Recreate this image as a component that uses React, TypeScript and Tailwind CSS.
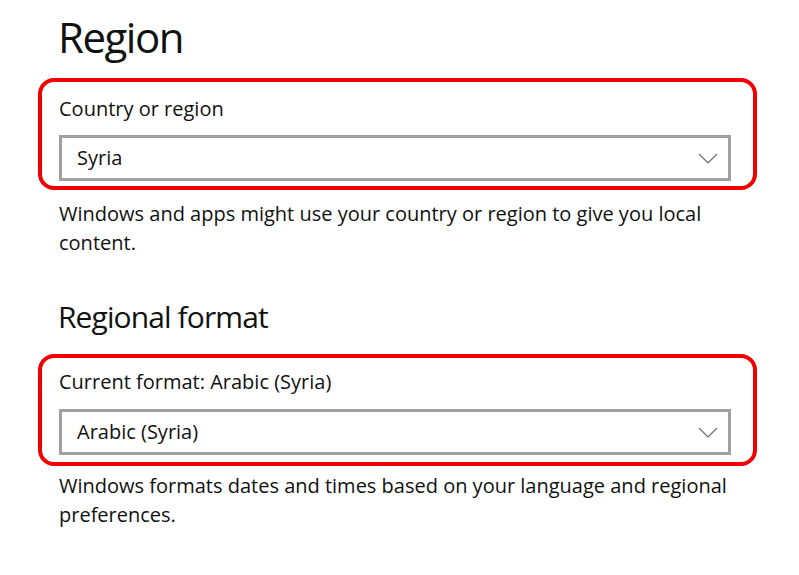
import React from 'react';

function Chevron() {
  return (
    <svg width="20" height="11" viewBox="0 0 20 11" fill="none" className="shrink-0">
      <path d="M1 1l9 9 9-9" stroke="#666" strokeWidth="1.1" />
    </svg>
  );
}

function Dropdown({ value }: { value: string }) {
  return (
    <div className="flex h-[46px] items-center justify-between border-[3px] border-[#a0a0a0] bg-white pl-[15px] pr-[10px]">
      <span className="text-[20px] leading-[28px]">{value}</span>
      <Chevron />
    </div>
  );
}

function Highlight({
  label,
  value,
  pt,
  gap,
  pb,
}: {
  label: string;
  value: string;
  pt: string;
  gap: string;
  pb: string;
}) {
  return (
    <div className={`w-[719px] rounded-[16px] border-4 border-[#f00000] pl-[17px] pr-[22px] ${pt} ${pb}`}>
      <div className="text-[20px] leading-[28px]">{label}</div>
      <div className={gap}>
        <Dropdown value={value} />
      </div>
    </div>
  );
}

export default function App() {
  return (
    <div
      className="h-[575px] w-[799px] overflow-hidden bg-white pl-[38px] text-[#111]"
      style={{ fontFamily: '"Open Sans", "Noto Sans", sans-serif' }}
    >
      <h1 className="mt-[12px] pl-[20px] text-[42px] leading-[50px] tracking-[-1.5px]">Region</h1>

      <div className="mt-[16px]">
        <Highlight label="Country or region" value="Syria" pt="pt-[13px]" gap="mt-[12px]" pb="pb-[5px]" />
      </div>

      <p className="mt-[9px] w-[700px] pl-[21px] text-[20px] leading-[29px]">
        Windows and apps might use your country or region to give you local content.
      </p>

      <h2 className="mt-[40px] pl-[20px] text-[30px] leading-[40px] tracking-[-0.9px]">Regional format</h2>

      <div className="mt-[17px]">
        <Highlight
          label="Current format: Arabic (Syria)"
          value="Arabic (Syria)"
          pt="pt-[10px]"
          gap="mt-[13px]"
          pb="pb-[7px]"
        />
      </div>

      <p className="mt-[5px] w-[700px] pl-[21px] text-[20px] leading-[29px]">
        Windows formats dates and times based on your language and regional preferences.
      </p>
    </div>
  );
}
